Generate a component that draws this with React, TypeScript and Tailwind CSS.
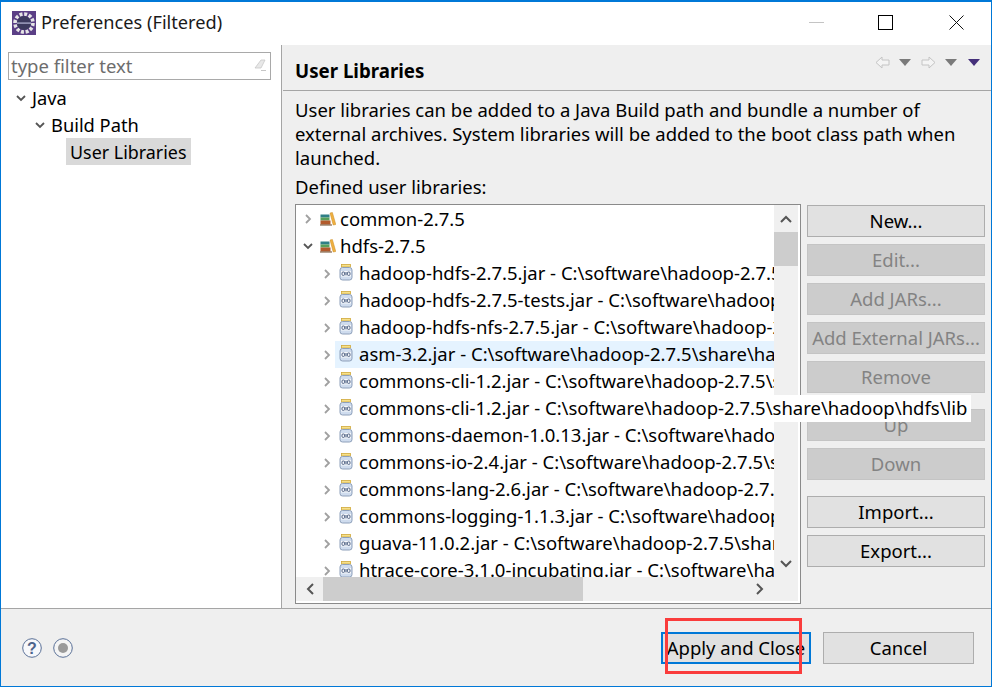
import React from "react";

const FONT = "font-['Noto_Sans','Open_Sans','Liberation_Sans',sans-serif]";

const Chevron = ({ open, dark }: { open?: boolean; dark?: boolean }) => (
  <svg width="10" height="10" viewBox="0 0 10 10" className="shrink-0">
    <path
      d={open ? "M1 3 L5 7 L9 3" : "M3 1 L7 5 L3 9"}
      fill="none"
      stroke={dark ? "#555555" : "#a0a0a0"}
      strokeWidth="1.8"
    />
  </svg>
);

const LibIcon = () => (
  <svg width="16" height="14" viewBox="0 0 16 14" className="shrink-0 ml-[2px] mr-[-1px]">
    <rect x="0.5" y="2.5" width="9" height="3" fill="#2f7f86" />
    <rect x="0.5" y="5.5" width="9" height="3" fill="#58a05a" />
    <rect x="0.5" y="8.5" width="10" height="4" fill="#b25a2c" />
    <path d="M10 1 L12.4 0.5 L15.8 12.5 L13.2 13 Z" fill="#f0b040" stroke="#c98a20" strokeWidth="0.5" />
    <rect x="0" y="12.5" width="12" height="1" fill="#6d4a2a" />
  </svg>
);

const JarIcon = () => (
  <svg width="14" height="17" viewBox="0 0 14 17" className="shrink-0">
    <rect x="2.5" y="0.5" width="9" height="2.5" fill="#f6e08a" stroke="#d0a93a" strokeWidth="0.8" />
    <rect x="1" y="3.5" width="12" height="12.5" rx="2.5" fill="#cfdcee" stroke="#8ea0ba" strokeWidth="1" />
    <rect x="2" y="7" width="10" height="5.5" fill="#f7f9fc" />
    <rect x="3" y="8" width="2.6" height="3.4" rx="1" fill="none" stroke="#3f5478" strokeWidth="0.9" />
    <path d="M7 8 V11.4" stroke="#3f5478" strokeWidth="1" />
    <rect x="8.4" y="8" width="2.6" height="3.4" rx="1" fill="none" stroke="#3f5478" strokeWidth="0.9" />
  </svg>
);

const Arrow = ({ flip }: { flip?: boolean }) => (
  <svg width="15" height="13" viewBox="0 0 15 13" className={`shrink-0 ${flip ? "-scale-x-100" : ""}`}>
    <path d="M7 1 L1 6.5 L7 12 V9 H14 V4 H7 Z" fill="#f4f4f4" stroke="#c4c4c4" strokeWidth="1" />
  </svg>
);

const Tri = ({ color = "#7a7a7a" }: { color?: string }) => (
  <svg width="12" height="7" viewBox="0 0 12 7" className="shrink-0 block">
    <path d="M0 0 H12 L6 7 Z" fill={color} />
  </svg>
);

const Btn = ({ label, disabled, className = "" }: { label: string; disabled?: boolean; className?: string }) => (
  <div
    className={`h-8 w-[178px] flex items-center justify-center border whitespace-nowrap pb-[2px] ${
      disabled
        ? "bg-[#cccccc] border-[#c4c4c4] text-[#838383]"
        : "bg-[#e1e1e1] border-[#adadad] text-black"
    } ${className}`}
  >
    {label}
  </div>
);

const jars = [
  "hadoop-hdfs-2.7.5.jar - C:\\software\\hadoop-2.7.5\\share\\hadoop\\hdfs",
  "hadoop-hdfs-2.7.5-tests.jar - C:\\software\\hadoop-2.7.5\\share\\hadoop\\hdfs",
  "hadoop-hdfs-nfs-2.7.5.jar - C:\\software\\hadoop-2.7.5\\share\\hadoop\\hdfs",
  "asm-3.2.jar - C:\\software\\hadoop-2.7.5\\share\\hadoop\\hdfs\\lib",
  "commons-cli-1.2.jar - C:\\software\\hadoop-2.7.5\\share\\hadoop\\hdfs\\lib",
  "commons-cli-1.2.jar - C:\\software\\hadoop-2.7.5\\share\\hadoop\\hdfs\\lib",
  "commons-daemon-1.0.13.jar - C:\\software\\hadoop-2.7.5\\share\\hadoop",
  "commons-io-2.4.jar - C:\\software\\hadoop-2.7.5\\share\\hadoop\\hdfs\\lib",
  "commons-lang-2.6.jar - C:\\software\\hadoop-2.7.5\\share\\hadoop\\hdfs",
  "commons-logging-1.1.3.jar - C:\\software\\hadoop-2.7.5\\share\\hadoop",
  "guava-11.0.2.jar - C:\\software\\hadoop-2.7.5\\share\\hadoop\\hdfs\\lib",
  "htrace-core-3.1.0-incubating.jar - C:\\software\\hadoop-2.7.5\\share",
];

export default function App() {
  return (
    <div className={`${FONT} relative w-[992px] h-[687px] overflow-hidden bg-white border border-[#0078d7] border-t-2 flex flex-col text-[18.5px] leading-[27px] text-black`}>
      {/* Title bar */}
      <div className="h-[43px] shrink-0 flex items-center bg-white pl-[11px] pb-[2px]">
        <svg width="24" height="24" viewBox="0 0 24 24" className="shrink-0">
          <rect width="24" height="24" fill="#5b3f86" />
          <circle cx="12" cy="12" r="9" fill="none" stroke="#e6e6e6" strokeWidth="3.6" strokeDasharray="3 1.7" />
          <circle cx="12" cy="12" r="7" fill="#3c3a5e" />
          <rect x="5" y="11.4" width="14" height="1.4" fill="#a6a6c6" />
        </svg>
        <span className="ml-[5px] text-[18.2px] text-[#1a1a1a]">Preferences (Filtered)</span>
        <div className="ml-auto flex items-center pr-[27px]">
          <div className="w-[15px] h-px bg-[#c4c4c4]" />
          <div className="w-[15px] h-[15px] border border-black ml-[54px]" />
          <svg width="15" height="15" viewBox="0 0 15 15" className="ml-[56px]">
            <path d="M0.5 0.5 L14.5 14.5 M14.5 0.5 L0.5 14.5" stroke="#111" strokeWidth="1" />
          </svg>
        </div>
      </div>

      {/* Body */}
      <div className="flex-1 min-h-0 flex">
        {/* Left */}
        <div className="w-[281px] shrink-0 bg-white border-r border-[#a5a5a5] pt-[7px] pl-[7px]">
          <div className="w-[263px] h-[28px] border border-[#a9a9a9] flex items-center pl-[2px] pr-[3px] pb-[2px]">
            <span className="text-[#6d6d6d]">type filter text</span>
            <svg width="14" height="14" viewBox="0 0 14 14" className="ml-auto">
              <path d="M2 10 L8 2 H12 L8 10 Z" fill="#e8e8e8" stroke="#c8c8c8" strokeWidth="0.8" />
              <path d="M8 12.5 H13" stroke="#b8b8b8" strokeWidth="0.8" />
            </svg>
          </div>
          <div className="mt-[4px] text-[18.3px]">
            <div className="flex items-center h-[27px] pl-[8px] gap-[6px]">
              <Chevron open dark />
              <span>Java</span>
            </div>
            <div className="flex items-center h-[27px] pl-[27px] gap-[6px]">
              <Chevron open dark />
              <span>Build Path</span>
            </div>
            <div className="flex items-center h-[27px] pl-[58px]">
              <span className="bg-[#d9d9d9] px-[4px] h-[27px] text-[17.9px] leading-[29px]">User Libraries</span>
            </div>
          </div>
        </div>

        {/* Right */}
        <div className="flex-1 min-w-0 bg-[#efefef] flex flex-col">
          <div className="h-[46px] shrink-0 border-b border-[#a5a5a5] flex pl-[12px] pr-[11px] pt-[12px] items-start ml-[1px]">
            <span className="font-bold text-[18.7px] leading-[27px]">User Libraries</span>
            <div className="ml-auto flex items-center mt-[-1px]">
              <Arrow />
              <span className="ml-[9px]"><Tri /></span>
              <span className="ml-[10px]"><Arrow flip /></span>
              <span className="ml-[9px]"><Tri /></span>
              <span className="ml-[11px]"><Tri color="#45307a" /></span>
            </div>
          </div>
          <div className="pl-[13px] pr-[9px] pt-[7px] leading-[24px] w-[700px]">
            <p className="w-[670px]">
              User libraries can be added to a Java Build path and bundle a number of external archives. System libraries will be added to the boot class path when launched.
            </p>
            <div className="mt-[3px] leading-[27px]">Defined user libraries:</div>
          </div>
          <div className="flex pl-[13px] mt-[4px] gap-[6px]">
            {/* Tree box */}
            <div className="w-[506px] h-[400px] border border-[#8a8a8a] bg-white flex flex-col pr-[2px]">
              <div className="flex-1 min-h-0 flex">
                <div className="flex-1 min-w-0 overflow-hidden pt-[1px]">
                  <div className="flex items-center h-[27px] pl-[7px] gap-[5px] whitespace-nowrap pb-[2px]">
                    <Chevron /><LibIcon /><span>common-2.7.5</span>
                  </div>
                  <div className="flex items-center h-[27px] pl-[7px] gap-[5px] whitespace-nowrap pb-[2px]">
                    <Chevron open dark /><LibIcon /><span>hdfs-2.7.5</span>
                  </div>
                  {jars.map((j, i) => (
                    <div key={i} className="flex items-center h-[27px] pl-[26px] whitespace-nowrap">
                      <Chevron />
                      <div className={`ml-[3px] flex items-center gap-[6px] h-[27px] pl-[4px] pb-[2px] flex-1 ${i === 3 ? "bg-[#e5f3ff]" : ""}`}>
                        <JarIcon /><span>{j}</span>
                      </div>
                    </div>
                  ))}
                </div>
                <div className="w-[24px] shrink-0 bg-[#f0f0f0] flex flex-col">
                  <div className="h-[27px] flex items-center justify-center">
                    <svg width="12" height="8" viewBox="0 0 12 8"><path d="M1 7 L6 2 L11 7" fill="none" stroke="#555" strokeWidth="2" /></svg>
                  </div>
                  <div className="h-[34px] bg-[#cdcdcd]" />
                  <div className="flex-1" />
                  <div className="h-[26px] flex items-center justify-center">
                    <svg width="12" height="8" viewBox="0 0 12 8"><path d="M1 1 L6 6 L11 1" fill="none" stroke="#555" strokeWidth="2" /></svg>
                  </div>
                </div>
              </div>
              <div className="h-[24px] shrink-0 bg-[#f0f0f0] flex mb-[2px]">
                <div className="w-[27px] flex items-center justify-center">
                  <svg width="8" height="12" viewBox="0 0 8 12"><path d="M7 1 L2 6 L7 11" fill="none" stroke="#555" strokeWidth="2" /></svg>
                </div>
                <div className="w-[260px] bg-[#cdcdcd]" />
                <div className="flex-1 flex items-center justify-end pr-[34px]">
                  <svg width="8" height="12" viewBox="0 0 8 12"><path d="M1 1 L6 6 L1 11" fill="none" stroke="#555" strokeWidth="2" /></svg>
                </div>
              </div>
            </div>
            {/* Buttons */}
            <div className="flex flex-col pt-[1px]">
              <Btn label="New..." />
              <Btn label="Edit..." disabled className="mt-[7px]" />
              <Btn label="Add JARs..." disabled className="mt-[7px]" />
              <Btn label="Add External JARs..." disabled className="mt-[7px]" />
              <Btn label="Remove" disabled className="mt-[7px]" />
              <Btn label="Up" disabled className="mt-[16px]" />
              <Btn label="Down" disabled className="mt-[7px]" />
              <Btn label="Import..." className="mt-[16px]" />
              <Btn label="Export..." className="mt-[7px]" />
            </div>
          </div>
        </div>
      </div>

      {/* Footer */}
      <div className="h-[78px] shrink-0 bg-[#efefef] border-t border-[#a5a5a5] flex items-center pl-[21px] pr-[17px]">
        <svg width="20" height="20" viewBox="0 0 20 20">
          <circle cx="10" cy="10" r="9.3" fill="#f7f8fb" stroke="#5a7097" strokeWidth="1" />
          <text x="10" y="15.5" textAnchor="middle" fontSize="16" fontWeight="700" fill="#4d648c" fontFamily="'Liberation Sans',sans-serif">?</text>
        </svg>
        <svg width="20" height="20" viewBox="0 0 20 20" className="ml-[11px]">
          <circle cx="10" cy="10" r="9.3" fill="#f4f4f4" stroke="#5a7097" strokeWidth="1" />
          <circle cx="10" cy="10" r="5" fill="#9a9a9a" />
        </svg>
        <div className="ml-auto flex gap-[12px]">
          <div className="w-[150px] h-[32px] border-2 border-[#0078d7] bg-[#e1e1e1] flex items-center justify-center whitespace-nowrap">Apply and Close</div>
          <div className="w-[151px] h-[32px] border border-[#adadad] bg-[#e1e1e1] flex items-center justify-center">Cancel</div>
        </div>
      </div>

      {/* Tooltip overlay */}
      <div className="absolute left-[357px] top-[393px] h-[27px] w-[613px] bg-white flex items-center pl-[1px] pb-[2px] whitespace-nowrap">
        commons-cli-1.2.jar - C:\software\hadoop-2.7.5\share\hadoop\hdfs\lib
      </div>
      {/* Annotation */}
      <div className="absolute left-[664px] top-[616px] w-[137px] h-[56px] border-[3px] border-[#fa3c3c]" />
    </div>
  );
}
